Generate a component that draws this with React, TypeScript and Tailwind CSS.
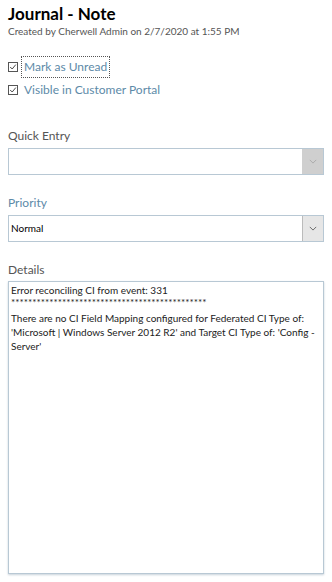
import React from "react";

function Check() {
  return (
    <span className="flex h-[10px] w-[10px] items-center justify-center border border-[#555] bg-white">
      <svg viewBox="0 0 10 10" className="h-[8px] w-[8px]">
        <path d="M1.5 5 L4 7.5 L8.5 2" fill="none" stroke="#444" strokeWidth="1.2" />
      </svg>
    </span>
  );
}

function Chevron({ color }: { color: string }) {
  return (
    <svg viewBox="0 0 10 6" className="h-[5px] w-[8px]">
      <path d="M1 1 L5 5 L9 1" fill="none" stroke={color} strokeWidth="1.2" />
    </svg>
  );
}

export default function App() {
  return (
    <div
      className="h-[582px] w-[332px] bg-white px-2 pt-[3px] text-[#333]"
      style={{ fontFamily: "Lato, 'Liberation Sans', sans-serif" }}
    >
      <h1 className="text-[17px] font-bold leading-[22px] text-black">Journal - Note</h1>
      <p className="text-[10px] leading-[12px] text-[#555]">
        Created by Cherwell Admin on 2/7/2020 at 1:55 PM
      </p>

      <div className="mt-[19px] flex flex-col gap-[5px]">
        <label className="flex items-center gap-[3px]">
          <Check />
          <span className="border border-dotted border-[#555] px-[2px] py-[3px] text-[12px] leading-[14px] text-[#5d8aa8]">
            Mark as Unread
          </span>
        </label>
        <label className="flex items-center gap-[6px]">
          <Check />
          <span className="text-[12px] leading-[14px] text-[#5d8aa8]">Visible in Customer Portal</span>
        </label>
      </div>

      <div className="mt-[32px] text-[12px] leading-[14px] text-[#555]">Quick Entry</div>
      <div className="mt-[5px] flex h-[27px] border border-[#b8c8d4] bg-white">
        <div className="flex-1" />
        <div className="flex w-[21px] items-center justify-center bg-[#cfcfcf]">
          <Chevron color="#aaa" />
        </div>
      </div>

      <div className="mt-[21px] text-[12px] leading-[14px] text-[#5d8aa8]">Priority</div>
      <div className="mt-[5px] flex h-[27px] border border-[#b8c8d4] bg-white">
        <div className="flex flex-1 items-center px-[2px] text-[10px] text-black">Normal</div>
        <div className="flex w-[21px] items-center justify-center border-l border-[#bbb] bg-[#e6e6e6]">
          <Chevron color="#666" />
        </div>
      </div>

      <div className="mt-[21px] text-[12px] leading-[14px] text-[#555]">Details</div>
      <div className="mt-[4px] h-[293px] border border-[#b8c8d4] bg-white px-[2px] pt-[1px] text-[10px] leading-[14px] text-[#222] shadow-[0_1px_2px_#c8d2da]">
        <p>Error reconciling CI from event: 331</p>
        <p className="leading-[10px]">**********************************************</p>
        <p className="mt-[4px]">
          There are no CI Field Mapping configured for Federated CI Type of: 'Microsoft | Windows Server 2012 R2'
          and Target CI Type of: 'Config - Server'
        </p>
      </div>
    </div>
  );
}
